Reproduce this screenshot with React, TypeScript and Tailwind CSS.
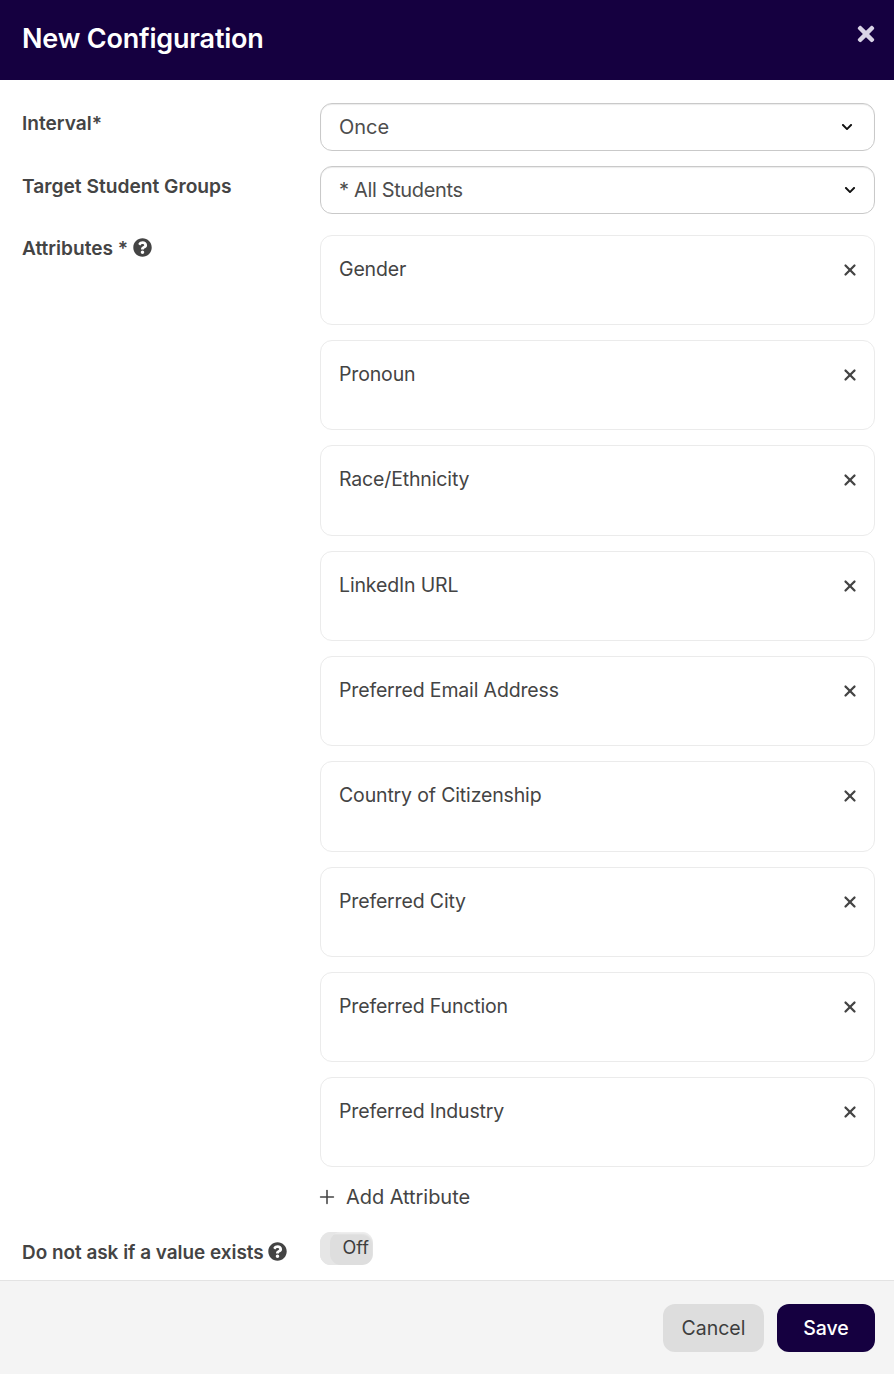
import { FaChevronDown, FaQuestionCircle, FaTimes } from "react-icons/fa";
import { Plus, X } from "lucide-react";

const attributes = [
  "Gender",
  "Pronoun",
  "Race/Ethnicity",
  "LinkedIn URL",
  "Preferred Email Address",
  "Country of Citizenship",
  "Preferred City",
  "Preferred Function",
  "Preferred Industry",
];

function Select({ value, valueClass, chevronClass }: { value: string; valueClass: string; chevronClass: string }) {
  return (
    <div className="flex h-[48px] items-center justify-between rounded-[12px] border border-[#c9c9c9] bg-white pl-[18px] shadow-[inset_0_1px_1px_rgba(0,0,0,0.08)]">
      <span className={`${valueClass} text-[20px] leading-none text-[#4d4d4d]`}>{value}</span>
      <FaChevronDown className={`${chevronClass} text-[12px] text-[#111111]`} />
    </div>
  );
}

export default function App() {
  return (
    <div className="flex h-[1374px] w-[894px] flex-col bg-white font-['Inter',sans-serif] text-[#444444]">
      <header className="relative flex h-[80px] shrink-0 items-center bg-[#150040] pb-[2px] pl-[22px]">
        <h1 className="text-[27px] font-semibold tracking-[-0.2px] text-white">New Configuration</h1>
        <FaTimes className="absolute right-[16px] top-[22px] text-[24px] text-[#d9d3e6]" />
      </header>

      <main className="flex flex-1 flex-col pr-[19px] pt-[23px]">
        <div className="flex">
          <label className="w-[320px] pl-[22px] pt-[9px] text-[19.1px] font-semibold leading-[23px]">
            Interval*
          </label>
          <div className="flex-1">
            <Select value="Once" valueClass="" chevronClass="mr-[21px]" />
          </div>
        </div>

        <div className="mt-[15px] flex">
          <label className="w-[320px] pl-[22px] pt-[9px] text-[19.2px] font-semibold leading-[23px]">
            Target Student Groups
          </label>
          <div className="flex-1">
            <Select value="* All Students" valueClass="tracking-[-0.35px]" chevronClass="mr-[18px]" />
          </div>
        </div>

        <div className="mt-[20.8px] flex">
          <label className="flex h-[28px] w-[320px] items-center gap-[5px] pl-[22px] text-[19.1px] font-semibold">
            Attributes *
            <FaQuestionCircle className="mb-[3px] text-[19px]" />
          </label>
          <div className="flex flex-1 flex-col gap-[15px]">
            {attributes.map((a) => (
              <div
                key={a}
                className="flex h-[90.3px] items-start justify-between rounded-[12px] border border-[#ebebeb] bg-white pl-[18px] pr-[15px] pt-[21px]"
              >
                <span className="text-[19.5px] leading-[25px] tracking-[-0.15px]">{a}</span>
                <X className="mt-[4px] h-[18px] w-[18px] text-[#444444]" strokeWidth={3} />
              </div>
            ))}
          </div>
        </div>

        <div className="ml-[316px] mt-[16.7px] flex h-[26px] items-center gap-[8px] text-[20px] tracking-[-0.05px]">
          <Plus className="h-[22px] w-[22px]" strokeWidth={1.7} />
          Add Attribute
        </div>

        <div className="mt-[22px] flex">
          <label className="flex h-[42px] w-[320px] items-center gap-[4px] pl-[22px] text-[18.9px] font-semibold">
            Do not ask if a value exists
            <FaQuestionCircle className="mb-[3px] text-[19px]" />
          </label>
          <div className="flex h-[33px] w-[53px] items-center justify-end rounded-[11px] bg-[#dedede] pr-[4px] shadow-[inset_10px_0_0_#e6e6e6,inset_0_2px_2px_rgba(255,255,255,0.5)]">
            <span className="mb-[2px] text-[18px] leading-none text-[#3d3d3d]">Off</span>
          </div>
        </div>
      </main>

      <footer className="flex h-[94px] shrink-0 items-center justify-end gap-[13px] border-t border-[#e3e3e3] bg-[#f4f4f4] pr-[19px]">
        <button className="h-[48px] w-[101px] rounded-[12px] bg-[#dddddd] pt-[2px] text-[19.5px] text-[#3d3d3d]">Cancel</button>
        <button className="h-[48px] w-[98px] rounded-[12px] bg-[#150040] pt-[2px] text-[19.5px] font-medium text-white">Save</button>
      </footer>
    </div>
  );
}
